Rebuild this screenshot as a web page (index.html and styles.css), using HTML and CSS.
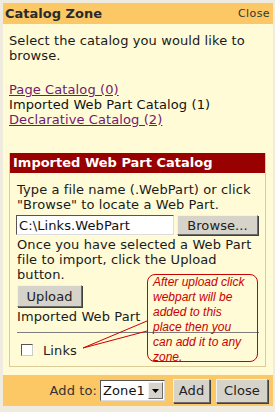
FILE: index.html
```html
<!DOCTYPE html>
<html>
<head>
<meta charset="utf-8">
<link rel="stylesheet" href="styles.css">
</head>
<body>
<div class="zone">
  <div class="titlebar">
    <span class="title">Catalog Zone</span>
    <span class="tclose">Close</span>
  </div>
  <div class="zbody">
    <p class="intro">Select the catalog you would like to browse.</p>
    <div class="catalogs">
      <a class="link" href="#">Page Catalog (0)</a>
      <span class="current">Imported Web Part Catalog (1)</span>
      <a class="link" href="#">Declarative Catalog (2)</a>
    </div>
    <div class="section">
      <div class="shead">Imported Web Part Catalog</div>
      <div class="scontent">
        <p class="txt">Type a file name (.WebPart) or click "Browse" to locate a Web Part.</p>
        <div class="filerow">
          <input class="file" type="text" value="C:\Links.WebPart">
          <span class="btn browse">Browse...</span>
        </div>
        <p class="txt">Once you have selected a Web Part file to import, click the Upload button.</p>
        <span class="btn upload">Upload</span>
        <p class="txt">Imported Web Part</p>
        <div class="rule"></div>
        <div class="checkrow">
          <span class="check"></span>
          <span class="clabel">Links</span>
        </div>
      </div>
      <svg class="pointer" width="256" height="215" viewBox="0 0 256 215">
        <polyline points="137,168 73,195 137,178" fill="none" stroke="#cc0000" stroke-width="1"/>
      </svg>
      <div class="callout">After upload click<br>webpart will be<br>added to this<br>place then you<br>can add it to any<br>zone.</div>
    </div>
  </div>
  <div class="footer">
    <span class="addto">Add to:</span>
    <span class="select"><span class="selval">Zone1</span><span class="arrow"><svg width="7" height="4" viewBox="0 0 7 4"><path d="M0 0H7L3.5 4Z" fill="#000"/></svg></span></span>
    <span class="btn fbtn add">Add</span>
    <span class="btn fbtn close">Close</span>
  </div>
</div>
</body>
</html>
```

FILE: styles.css
```css
html, body {
  margin: 0;
  padding: 0;
}
body {
  background: #efebdf;
  width: 275px;
  height: 412px;
  overflow: hidden;
  font-family: "DejaVu Sans", Verdana, sans-serif;
  font-size: 13px;
  letter-spacing: 0.1px;
  color: #1a1a1a;
}
.zone {
  margin: 3px 2px 0 3px;
  width: 270px;
  background: #fffbd6;
}
.titlebar {
  height: 21px;
  background: #fcc865;
  display: flex;
  align-items: center;
  justify-content: space-between;
  padding: 0 3px 0 2px;
}
.title {
  font-weight: bold;
  font-size: 13px;
  letter-spacing: 0;
  color: #2a2a2a;
}
.tclose {
  font-size: 11px;
  letter-spacing: 0.4px;
  color: #333;
}
.zbody {
  padding: 9px 7px 8px 6px;
  line-height: 15px;
}
.intro {
  margin: 0 0 19px 0;
}
.catalogs {
  display: flex;
  flex-direction: column;
  align-items: flex-start;
  margin-bottom: 26px;
}
.link {
  color: #6e1a6e;
  text-decoration: underline;
}
.current {
  color: #111;
}
.section {
  position: relative;
  border: 1px solid #dccc98;
  border-top: none;
}
.shead {
  background: #990000;
  color: #fff;
  font-weight: bold;
  letter-spacing: 0;
  height: 20px;
  line-height: 20px;
  padding-left: 3px;
}
.scontent {
  padding: 9px 6px 5px 7px;
}
.txt {
  margin: 0;
}
.filerow {
  display: flex;
  gap: 3px;
  margin: 3px 0 2px -1px;
  height: 20px;
}
.file {
  box-sizing: border-box;
  width: 158px;
  height: 20px;
  margin: 0;
  padding: 0 2px;
  font-family: "DejaVu Sans", Verdana, sans-serif;
  font-size: 13px;
  letter-spacing: 0.1px;
  color: #111;
  background: #fff;
  border: 1px solid;
  border-color: #555 #ddd #ddd #555;
  outline: none;
}
.btn {
  box-sizing: border-box;
  display: inline-flex;
  align-items: center;
  justify-content: center;
  background: #d6d3cb;
  color: #222;
  border: 1px solid;
  border-color: #f4f2ee #6b6b6b #6b6b6b #f4f2ee;
  box-shadow: 1px 1px 0 #404040;
}
.browse {
  width: 81px;
  height: 20px;
}
.upload {
  width: 65px;
  height: 22px;
  margin: 3px 0 2px 0;
}
.rule {
  height: 1px;
  background: #7d7d7d;
  margin: 8px 0 0 0;
}
.checkrow {
  display: flex;
  align-items: center;
  height: 22px;
  margin-top: 6px;
  padding-left: 4px;
}
.check {
  box-sizing: border-box;
  width: 12px;
  height: 12px;
  background: #fff;
  border: 1px solid;
  border-color: #555 #ccc #ccc #555;
  margin-right: 10px;
}
.clabel {
  color: #222;
}
.pointer {
  position: absolute;
  left: 0;
  top: 0;
  pointer-events: none;
}
.callout {
  position: absolute;
  left: 137px;
  top: 121px;
  width: 111px;
  height: 88px;
  box-sizing: border-box;
  border: 1px solid #cc0000;
  border-radius: 8px;
  padding: 0 0 0 5px;
  font-family: "Liberation Sans", Arial, sans-serif;
  font-style: italic;
  font-size: 12px;
  letter-spacing: 0;
  line-height: 15px;
  color: #cc0000;
}
.footer {
  height: 31px;
  background: #fcc865;
  display: flex;
  align-items: center;
  justify-content: flex-end;
  padding-right: 5px;
}
.addto {
  color: #333;
  margin-right: 3px;
}
.select {
  box-sizing: border-box;
  width: 65px;
  height: 21px;
  display: flex;
  align-items: center;
  background: #fff;
  border: 1px solid;
  border-color: #555 #ddd #ddd #555;
  margin-right: 8px;
}
.selval {
  flex: 1;
  padding-left: 2px;
  color: #111;
}
.arrow {
  box-sizing: border-box;
  width: 15px;
  height: 17px;
  margin-right: 1px;
  display: flex;
  align-items: center;
  justify-content: center;
  background: #d6d3cb;
  border: 1px solid;
  border-color: #f4f2ee #6b6b6b #6b6b6b #f4f2ee;
}
.fbtn {
  height: 24px;
}
.add {
  width: 37px;
  margin-right: 6px;
}
.close {
  width: 52px;
}
```
